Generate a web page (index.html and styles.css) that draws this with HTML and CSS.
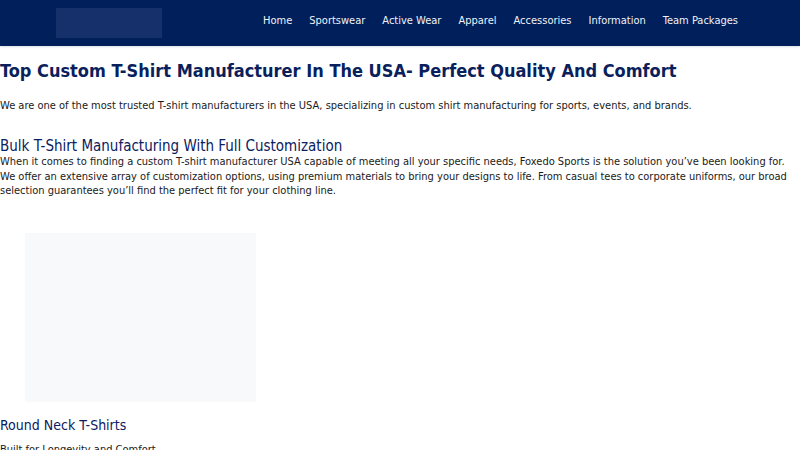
FILE: index.html
```html
<!DOCTYPE html>
<html lang="en">
<head>
<meta charset="utf-8">
<title>Foxedo Sports</title>
<link rel="stylesheet" href="styles.css">
</head>
<body>
<header class="site-header">
  <div class="logo"></div>
  <nav class="nav">
    <a href="#">Home</a>
    <a href="#">Sportswear</a>
    <a href="#">Active Wear</a>
    <a href="#">Apparel</a>
    <a href="#">Accessories</a>
    <a href="#">Information</a>
    <a href="#">Team Packages</a>
  </nav>
</header>
<main class="content">
  <h1 class="title">Top Custom T-Shirt Manufacturer In The USA- Perfect Quality And Comfort</h1>
  <p class="intro">We are one of the most trusted T-shirt manufacturers in the USA, specializing in custom shirt manufacturing for sports, events, and brands.</p>
  <h2 class="section-title">Bulk T-Shirt Manufacturing With Full Customization</h2>
  <p class="section-text">When it comes to finding a custom T-shirt manufacturer USA capable of meeting all your specific needs, Foxedo Sports is the solution you’ve been looking for. We offer an extensive array of customization options, using premium materials to bring your designs to life. From casual tees to corporate uniforms, our broad selection guarantees you’ll find the perfect fit for your clothing line.</p>
  <div class="product">
    <div class="product-image"></div>
    <h3 class="product-title">Round Neck T-Shirts</h3>
    <p class="product-text">Built for Longevity and Comfort</p>
  </div>
</main>
</body>
</html>
```
FILE: styles.css
```css
* { box-sizing: border-box; }
html, body { margin: 0; padding: 0; background: #fff; }
body { font-family: "DejaVu Sans Condensed", "DejaVu Sans", sans-serif; font-stretch: semi-condensed; color: #1a1a1a; }
.site-header {
  height: 46px;
  background: #001f5b;
  box-shadow: 0 1px 2px rgba(0, 32, 96, 0.15);
  display: flex;
  align-items: center;
  justify-content: space-between;
  padding: 0 62px 0 56px;
}
.logo { width: 106px; height: 30px; background: #15306a; margin-top: -1px; }
.nav { display: flex; gap: 17px; margin-bottom: 5px; }
.nav a { color: #f0f2f7; text-decoration: none; font-size: 11px; line-height: 14px; }
.content { padding: 0; }
.title { font-size: 18px; font-weight: bold; color: #0a1f5c; margin: 14px 0 0; line-height: 22px; }
.intro { font-size: 11px; line-height: 14px; margin: 17px 0 0; }
.section-title { font-size: 15px; font-weight: normal; color: #0a2060; margin: 24px 0 0; line-height: 18px; }
.section-text { font-size: 11px; line-height: 14.5px; margin: 0; }
.product { margin-top: 34px; }
.product-image { width: 231px; height: 169px; background: #f8f9fb; margin-left: 25px; }
.product-title { font-size: 14px; font-weight: normal; color: #0a2060; margin: 15px 0 0; line-height: 17px; }
.product-text { font-size: 11px; margin: 9px 0 0; line-height: 14px; }
```
